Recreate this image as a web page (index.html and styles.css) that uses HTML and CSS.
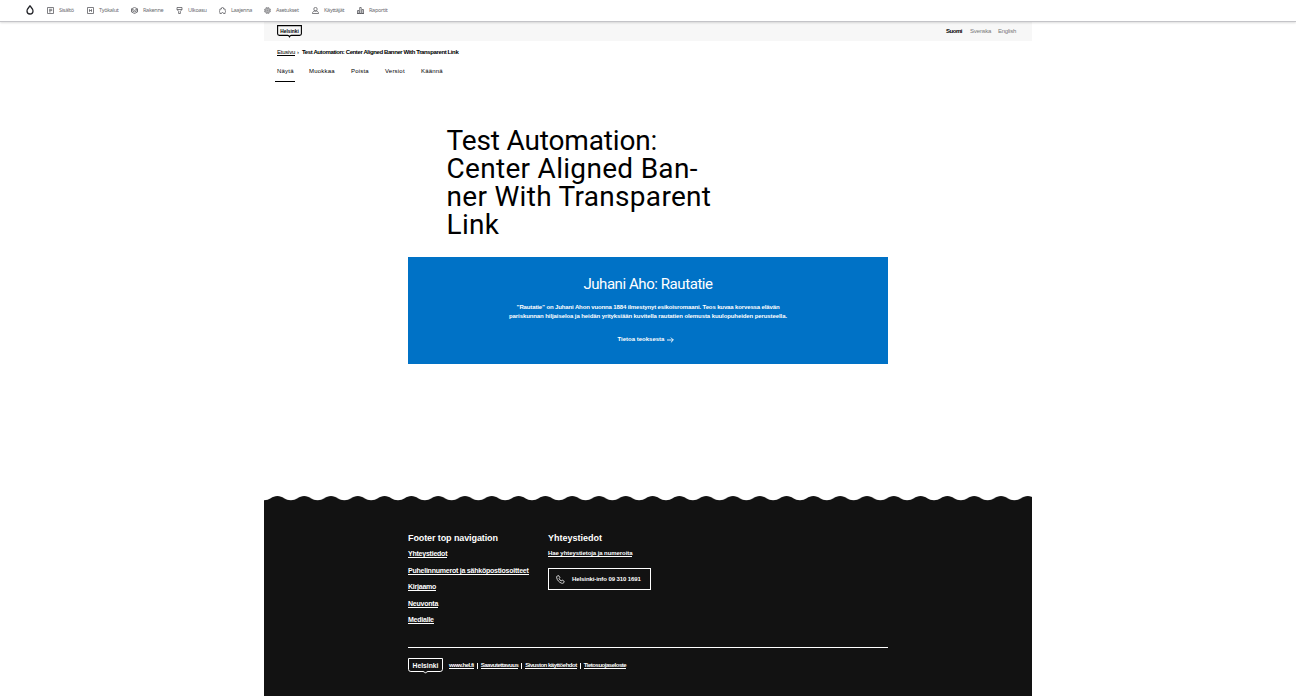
FILE: index.html
```html
<!DOCTYPE html>
<html lang="fi">
<head>
<meta charset="utf-8">
<title>Test Automation: Center Aligned Banner With Transparent Link</title>
<link rel="stylesheet" href="styles.css">
</head>
<body>
<nav class="toolbar">
  <a class="tool drop"><svg width="8" height="10" viewBox="0 0 8 10"><path d="M4 .8C3.200 2.100 1 3.800 1 6a3 3 0 0 0 6 0C7 3.800 4.800 2.100 4 .8z"/></svg></a>
  <a class="tool t1"><svg width="7" height="7" viewBox="0 0 7 7"><path d="M.5.5h6v6h-6zM2 2.300h3.200M2 3.600h3.200M2 4.900h1.700"/></svg>Sisältö</a>
  <a class="tool t2"><svg width="7" height="7" viewBox="0 0 7 7"><path d="M.5.5h6v6h-6zM2.500 2.200v2.600M4.500 2.200v2.600M2.500 3.500h2"/></svg>Työkalut</a>
  <a class="tool t3"><svg width="7" height="7" viewBox="0 0 7 7"><path d="M3.500.4l3 1.500-3 1.500-3-1.500zM.5 3.400l3 1.500 3-1.500M.5 5l3 1.500 3-1.500M.5 1.900V5M6.500 1.900V5"/></svg>Rakenne</a>
  <a class="tool t4"><svg width="7" height="7" viewBox="0 0 7 7"><path d="M1 .5h5v2L4.400 4.300v2.200H2.600V4.300L1 2.500zM1 2.500h5"/></svg>Ulkoasu</a>
  <a class="tool t5"><svg width="7" height="7" viewBox="0 0 7 7"><path d="M.9 2h1.500a1.150 1.150 0 1 1 2.200 0h1.500v1.500a.9.9 0 0 1 0 1.700v1.300H4.500a1 1 0 0 0-2 0H.9V5.200a.9.9 0 0 1 0-1.700z"/></svg>Laajenna</a>
  <a class="tool t6"><svg width="7" height="7" viewBox="0 0 7 7"><circle cx="3.500" cy="3.500" r="3" stroke-dasharray="1.800 .5"/><circle cx="3.500" cy="3.500" r="2"/><circle cx="3.500" cy="3.500" r=".7"/></svg>Asetukset</a>
  <a class="tool t7"><svg width="7" height="7" viewBox="0 0 7 7"><circle cx="3.500" cy="2.100" r="1.700"/><path d="M.4 6.500c0-1.500 1-2.300 2.200-2.400h1.800c1.200.1 2.200.9 2.200 2.400z"/></svg>Käyttäjät</a>
  <a class="tool t8"><svg width="7" height="7" viewBox="0 0 7 7"><path d="M.5 3.500h1.500v3H.5zM2.700.5h1.500v6H2.700zM5 2.500h1.500v4H5zM0 6.500h7"/></svg>Raportit</a>
</nav>
<div class="page">
  <header class="topbar">
    <svg class="logo" width="25" height="13" viewBox="0 0 25 13"><path d="M.6.6h23.800v8.200q0 1.600-1.800 1.600h-8.300q-1.200 0-1.800 1.300-.6-1.300-1.800-1.300H2.400Q.6 10.400.6 8.800z"/><text x="3.300" y="7.500" textLength="18.500" lengthAdjust="spacingAndGlyphs">Helsinki</text></svg>
    <div class="langs"><b class="la">Suomi</b><span class="lb">Svenska</span><span class="lc">English</span></div>
  </header>
  <div class="crumbs"><a class="home">Etusivu</a><i class="sep">›</i><b class="here">Test Automation: Center Aligned Banner With Transparent Link</b></div>
  <nav class="tabs"><a class="tab current">Näytä</a><a class="tab">Muokkaa</a><a class="tab">Poista</a><a class="tab">Versiot</a><a class="tab">Käännä</a></nav>
  <main>
    <h1 class="title"><span class="tight">Test Automation:</span><br>Center Aligned Ban-<br>ner With Transparent<br>Link</h1>
    <section class="banner">
      <h2 class="banner-title">Juhani Aho: Rautatie</h2>
      <p class="banner-text"><span class="line-a">”Rautatie” on Juhani Ahon vuonna 1884 ilmestynyt esikoisromaani. Teos kuvaa korvessa elävän</span><br>pariskunnan hiljaiseloa ja heidän yrityksiään kuvitella rautatien olemusta kuulopuheiden perusteella.</p>
      <a class="more">Tietoa teoksesta<svg width="7" height="6" viewBox="0 0 7 6"><path d="M0 3h6.300M3.900.6 6.300 3 3.900 5.400"/></svg></a>
    </section>
  </main>
  <footer class="footer">
    <svg class="wave" width="768" height="6"><defs><pattern id="w" width="26.800" height="6" patternUnits="userSpaceOnUse"><path d="M0 4.300C5.500 4.300 8 0 13.400 0S21.300 4.300 26.800 4.300V6H0z"/></pattern></defs><rect width="768" height="6" fill="url(#w)"/></svg>
    <div class="inner">
      <div class="cols">
        <div class="col"><h3 class="heading ha">Footer top navigation</h3>
          <a class="flink">Yhteystiedot</a><a class="flink">Puhelinnumerot ja sähköpostiosoitteet</a><a class="flink">Kirjaamo</a><a class="flink">Neuvonta</a><a class="flink">Medialle</a></div>
        <div class="col"><h3 class="heading">Yhteystiedot</h3>
          <a class="search">Hae yhteystietoja ja numeroita</a>
          <a class="phone"><svg width="9" height="9" viewBox="0 0 9 9"><path d="M1.200 1 2.700.6 3.900 2.700 3.100 3.600C3.500 4.700 4.300 5.400 5.200 5.900L6.100 5 8.200 6.300 7.700 7.800C7.200 8.500 6 8.400 5.100 8 2.900 7 1.200 5.100.7 2.900.5 2.100.6 1.300 1.200 1z"/></svg>Helsinki-info 09 310 1691</a></div>
      </div>
      <div class="bottom">
        <svg class="logo light" width="35" height="17" viewBox="0 0 35 17"><path d="M.5.5h34v10.800q0 2.200-2.400 2.200H20q-1.600 0-2.500 1.700-.9-1.700-2.500-1.700H2.900Q.5 13.500.5 11.300z"/><text x="4.600" y="9.700" textLength="25.800" lengthAdjust="spacingAndGlyphs">Helsinki</text></svg>
        <a class="legal">www.hel.fi</a><i class="bar"></i><a class="legal">Saavutettavuus</a><i class="bar"></i><a class="legal">Sivuston käyttöehdot</a><i class="bar"></i><a class="legal">Tietosuojaseloste</a>
      </div>
    </div>
  </footer>
</div>
</body>
</html>
```
FILE: styles.css
```css
* { box-sizing: border-box; }
body { margin: 0; height: 696px; overflow: hidden; background: #fff; font-family: "Liberation Sans", Arial, sans-serif; color: #000; }
h1, h2, h3, p { margin: 0; font-weight: 400; }
svg { display: block; flex: none; }
i { font-style: normal; }

.toolbar { display: flex; height: 22px; padding-left: 26px; border-bottom: 1px solid #c4c4c8; box-shadow: 0 1px 2px #0002; position: relative; font: 5.5px/9px "Noto Sans", sans-serif; color: #6b6c71; letter-spacing: -.3px; }
.tool { display: flex; align-items: center; gap: 5px; height: 21px; white-space: nowrap; }
.tool svg { fill: none; stroke: #55565b; stroke-width: .75; }
.drop { width: 21px; height: 20px; }
.tool.drop svg { stroke: #232429; stroke-width: 1.3; }
.t1 { width: 40px; } .t2 { width: 44px; } .t3 { width: 45px; } .t4 { width: 43px; }
.t5 { width: 45px; } .t6 { width: 48px; } .t7 { width: 45px; }

.page { width: 768px; height: 674px; margin: 0 auto; display: flex; flex-direction: column; }
.topbar { height: 19px; padding: 3px 16px 0 13px; background: #f7f7f7; display: flex; justify-content: space-between; }
.logo { fill: none; stroke: #000; stroke-width: 1.100; }
.logo text { fill: #000; stroke: none; font: 700 5px "Liberation Sans", sans-serif; }
.light { stroke: #fff; stroke-width: 1; margin-right: 6px; }
.light text { fill: #fff; font-size: 6.500px; }
.langs { display: flex; font-size: 6px; line-height: 12px; color: #777; }
.la { color: #000; width: 24px; letter-spacing: -.450px; }
.lb { width: 28px; letter-spacing: -.280px; }
.lc { width: 18px; letter-spacing: -.240px; white-space: nowrap; }

.crumbs { display: flex; height: 15px; margin-top: 8px; padding-left: 13px; font-size: 6px; line-height: 7px; white-space: nowrap; }
.home { letter-spacing: -.240px; border-bottom: 1px solid #000; height: 7px; width: 18px; }
.sep { width: 7px; padding-left: 2px; }
.here { letter-spacing: -.390px; }
.tabs { display: flex; gap: 14px; padding-left: 11px; font-size: 6px; line-height: 14px; letter-spacing: .200px; height: 19px; }
.tab { height: 18px; width: 20px; padding: 0 0 0 2px; white-space: nowrap; }
.tab:nth-child(1) { width: 18px; }
.tab:nth-child(2) { width: 28px; margin-left: 0; }
.tab:nth-child(4) { width: 22px; }
.tab.current { width: 20px; margin-right: -2px; border-bottom: 1px solid #000; }

.title { margin: 44px 0 0 182.500px; font: 400 28px/28px Roboto, sans-serif; letter-spacing: .300px; }
.tight { letter-spacing: -.150px; }
.banner { width: 480px; height: 107px; margin: 18px auto 0; padding-top: 18px; background: #0072c6; color: #fff; display: flex; flex-direction: column; align-items: center; }
.banner-title { font: 400 15px/19px Roboto, sans-serif; letter-spacing: -.430px; }
.banner-text { margin-top: 9px; font-size: 6px; font-weight: 700; line-height: 9px; text-align: center; letter-spacing: -.090px; white-space: nowrap; height: 18px; }
.line-a { letter-spacing: -.130px; }
.more { display: flex; align-items: center; gap: 3px; margin: 14px 4px 0 0; font-size: 6px; font-weight: 700; line-height: 9px; }
.more svg { fill: none; stroke: #fff; stroke-width: .9; }

.footer { margin-top: auto; height: 200px; display: flex; flex-direction: column; color: #fff; }
.wave { fill: #121212; }
.inner { flex: 1; margin-top: -1px; padding: 0 144px; background: #121212; }
.cols { display: flex; padding-top: 30px; height: 146px; }
.col { width: 140px; white-space: nowrap; }
.heading { font-size: 9px; font-weight: 700; line-height: 14px; height: 14px; margin-bottom: 4px; }
.ha { letter-spacing: -.100px; }
.flink { display: block; width: max-content; height: 9px; margin-bottom: 7.500px; font-size: 7px; line-height: 9px; font-weight: 700; letter-spacing: -.230px; border-bottom: 1px solid #fff; }
.search { display: block; width: max-content; height: 8px; font-size: 6px; line-height: 8px; font-weight: 700; letter-spacing: -.075px; border-bottom: 1px solid #fff; }
.phone { display: flex; align-items: center; gap: 7px; width: 103px; height: 22px; margin-top: 11px; padding-left: 7px; border: 1px solid #fff; font-size: 6px; font-weight: 700; letter-spacing: -.090px; }
.phone svg { fill: none; stroke: #fff; stroke-width: .8; }
.bottom { display: flex; border-top: 1px solid #fff; padding-top: 10px; white-space: nowrap; }
.legal { margin-top: 4px; height: 7px; font-size: 6px; line-height: 7px; font-weight: 700; letter-spacing: -.480px; border-bottom: 1px solid #fff; }
.bar { width: 1px; height: 6px; margin: 5px 3px 0; background: #fff; }
```
